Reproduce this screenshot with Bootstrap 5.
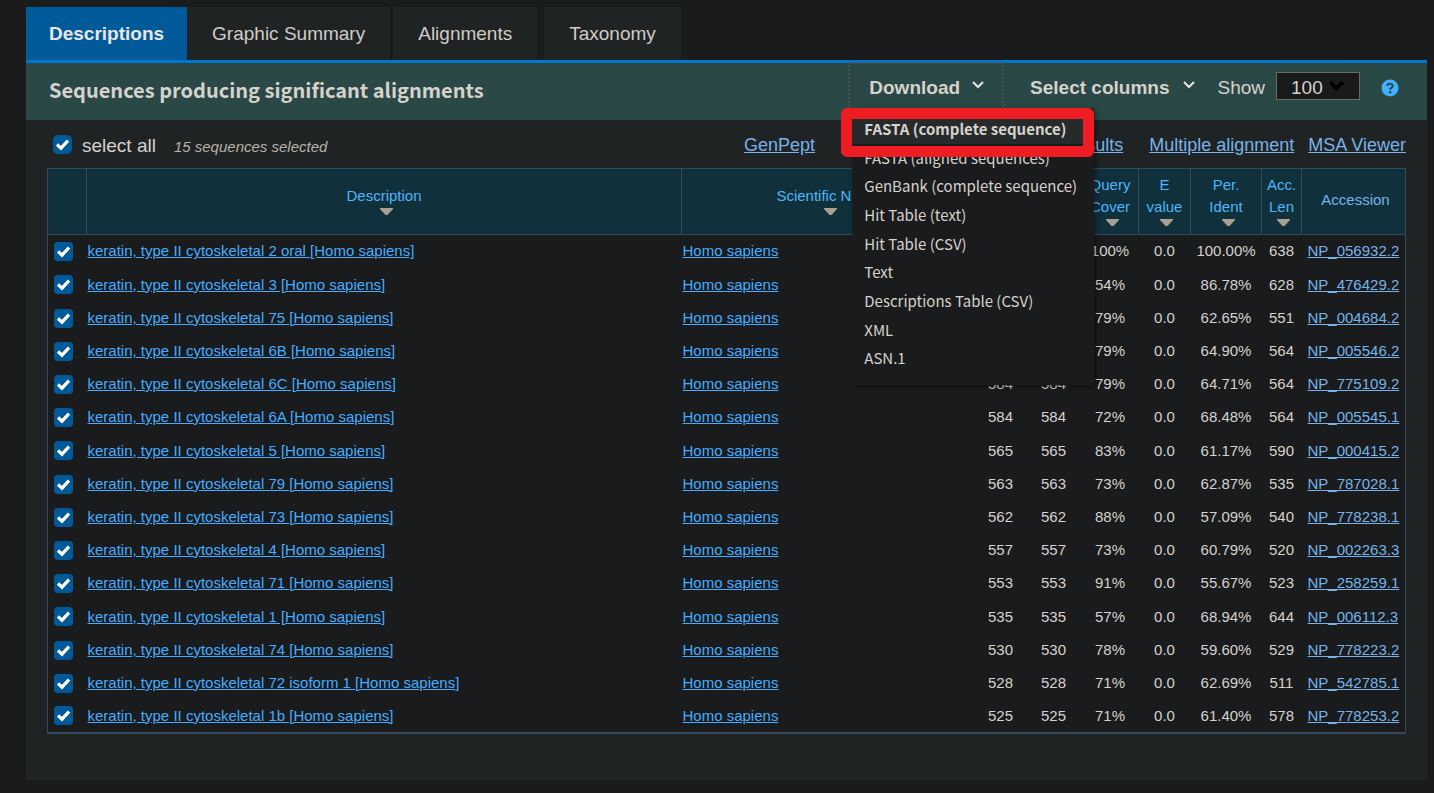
<!DOCTYPE html>
<html lang="en" data-bs-theme="dark">
<head>
<meta charset="utf-8">
<meta name="viewport" content="width=device-width, initial-scale=1">
<title>Sequence alignments</title>
<link href="https://cdn.jsdelivr.net/npm/bootstrap@5.3.0/dist/css/bootstrap.min.css" rel="stylesheet">
<style>
  body { background: #191b1c; color: #d6d2cc; font-family: "Liberation Sans", Arial, sans-serif; font-size: 15px; line-height: 22px; }
  .page-wrap { padding: 7px 7px 13px 26px; }
  a { color: #45adff; }
  a:hover { color: #8fcaff; }

  .result-tabs { border-bottom: 3px solid #0077cc; }
  .result-tabs .nav-link { background: #202324; color: #d0ccc6; font-size: 19px; line-height: 29px; padding: 12px 25px; border-radius: 0; }
  .result-tabs .nav-link.active { background: #005a99; color: #e8e6e3; font-weight: 700; padding: 12px 23px; }
  .tab-near { margin-left: 3px; }
  .tab-far { margin-left: 7px; }

  .panel-head { background: #294846; height: 57px; padding: 0 28px 4px 23px; font-size: 19px; }
  .panel-title { font: 700 20px/30px "Noto Sans CJK SC", sans-serif; color: #d6d2cc; }
  .head-tools { height: 50px; }
  .tool-btn { background: none; border: 0; padding: 0; color: inherit; font-weight: 700; gap: 12px; }
  .tool-btn svg { margin-bottom: 6px; }
  .columns-btn { gap: 14px; }
  .download-box { margin-top: -1px; margin-right: 26px; height: 48px; border: 2px dotted #4b5052; border-bottom: 0; }
  .download-box .tool-btn { height: 46px; padding: 2px 18px 0 19px; }
  .show-label { margin-left: 22px; margin-right: 11px; }
  .show-select { width: 84px; height: 28px; border: 1px solid #73695c; border-radius: 0; background-color: #181a1b; color: #d6d2cc; font-size: 19px; line-height: 22px; padding: 4px 0 0 14px; margin-bottom: 5px;
    background-image: url("data:image/svg+xml,%3Csvg xmlns='http://www.w3.org/2000/svg' viewBox='0 0 16 16'%3E%3Cpath d='M2 5l6 5.500 6-5.500' fill='none' stroke='%23000' stroke-width='3.500'/%3E%3C/svg%3E"); background-size: 17px; background-position: right 14px top 4px; }
  .help-btn { margin-left: 21px; line-height: 0; }

  .download-menu { top: 44px; left: 2px; width: 242px; height: 277px; padding: 7px 0 12px; margin: 0; z-index: 5; background: #191b1c; box-shadow: 2px 2px 5px rgba(0, 0, 0, .4); list-style: none; font: 15px/28px "Noto Sans CJK SC", sans-serif; }
  .download-menu a { color: #d6d2cc; text-decoration: none; padding-left: 12px; white-space: nowrap; }
  .download-menu li:first-child { background: #262a2b; font-weight: 700; }
  .callout-frame { top: 44px; left: -9px; width: 253px; height: 49px; z-index: 6; border: 11px solid #ee1c23; border-radius: 6px; pointer-events: none; }

  .panel-main { background: #202324; padding: 0 21px 46px; }
  .list-bar { height: 48px; padding-left: 6px; font-size: 18px; }
  .list-bar a, .accession a { color: #77b3ea; }
  .select-all { font-size: 19px; }
  .select-all label { margin-left: 10px; margin-top: 3px; }
  .picked { font-size: 15px; margin: 5px 0 0 18px; color: #b9b2a8; }
  .list-links { gap: 26px; padding-top: 2px; }
  .list-links .pair { gap: 14px; }
  .form-check-input { width: 19px; height: 19px; margin: 0; border: 0; border-radius: 4px; }
  .form-check-input:checked { background-color: #005a99; background-size: 19px; background-image: url("data:image/svg+xml,%3Csvg xmlns='http://www.w3.org/2000/svg' viewBox='0 0 19 19'%3E%3Cpath d='M4 9.500l4 3.700L15 5.700' fill='none' stroke='%23fff' stroke-width='3.200'/%3E%3C/svg%3E"); }

  .hits { width: 100%; table-layout: fixed; border-collapse: collapse; background: #191b1c; border: 1px solid #34495e; border-bottom-width: 2px; }
  .hits th { height: 66px; border: 1px solid #34495e; background: #10313b; color: #4fb4fa; font-weight: 400; text-align: center; vertical-align: middle; padding: 0 0 3px; }
  .hits th.accession-head { color: #77b3ea; padding-left: 4px; }
  .hits th svg { display: block; margin: 1px auto 0; position: relative; left: 2px; }
  .hits td { height: 33px; padding: 0; text-align: center; white-space: nowrap; }
  .hits tbody tr:nth-child(5n+2) td { height: 34px; }
  .hits .txt { text-align: left; overflow: hidden; text-overflow: ellipsis; padding-left: 1px; }
  .hits .accession { text-align: left; padding-left: 6px; }
  .hits .form-check-input { display: block; margin: 0 0 0 6px; }
  .c-pick { width: 39px; } .c-sci { width: 294px; } .c-max { width: 50px; } .c-total { width: 56px; } .c-cover { width: 57px; }
  .c-e { width: 52px; } .c-ident { width: 71px; } .c-len { width: 40px; } .c-acc { width: 104px; }
</style>
</head>
<body>
<svg class="d-none" aria-hidden="true">
  <symbol id="sort" viewBox="0 0 13 7"><path d="M0 0h13v1L7.500 7h-2L0 1z" fill="#a8a095"/></symbol>
  <symbol id="chev" viewBox="0 0 12 8"><path d="M1 1l5 5 5-5" fill="none" stroke="#e8e6e3" stroke-width="2"/></symbol>
</svg>
<main class="page-wrap">
  <nav class="nav result-tabs" aria-label="Results">
    <a class="nav-link active" href="#descriptions">Descriptions</a>
    <a class="nav-link" href="#graphic">Graphic Summary</a>
    <a class="nav-link tab-near" href="#alignments">Alignments</a>
    <a class="nav-link tab-far" href="#taxonomy">Taxonomy</a>
  </nav>

  <section id="descriptions">
    <header class="panel-head d-flex justify-content-between">
      <h1 class="panel-title mb-0 align-self-center">Sequences producing significant alignments</h1>
      <div class="head-tools d-flex align-items-center">
        <div class="download-box position-relative align-self-start">
          <button class="tool-btn d-flex align-items-center" type="button" aria-expanded="true">Download <svg width="12" height="8"><use href="#chev"/></svg></button>
          <ul class="download-menu position-absolute d-flex flex-column">
            <li class="flex-fill"><a class="d-block" href="#">FASTA (complete sequence)</a></li>
            <li class="flex-fill"><a class="d-block" href="#">FASTA (aligned sequences)</a></li>
            <li class="flex-fill"><a class="d-block" href="#">GenBank (complete sequence)</a></li>
            <li class="flex-fill"><a class="d-block" href="#">Hit Table (text)</a></li>
            <li class="flex-fill"><a class="d-block" href="#">Hit Table (CSV)</a></li>
            <li class="flex-fill"><a class="d-block" href="#">Text</a></li>
            <li class="flex-fill"><a class="d-block" href="#">Descriptions Table (CSV)</a></li>
            <li class="flex-fill"><a class="d-block" href="#">XML</a></li>
            <li class="flex-fill"><a class="d-block" href="#">ASN.1</a></li>
          </ul>
          <div class="callout-frame position-absolute"></div>
        </div>
        <button class="tool-btn columns-btn d-flex align-items-center" type="button">Select columns <svg width="12" height="8"><use href="#chev"/></svg></button>
        <label class="show-label" for="show">Show</label>
        <select class="form-select show-select" id="show"><option>10</option><option>50</option><option selected>100</option></select>
        <a class="help-btn" href="#" aria-label="Help"><svg width="18" height="18" viewBox="0 0 18 18"><circle cx="9" cy="9" r="8.500" fill="#40b0ff"/><path d="M6.300 7C6.500 3.800 11.800 3.900 11.700 7c-.1 1.900-2.600 1.900-2.600 3.700" fill="none" stroke="#294846" stroke-width="2"/><circle cx="9.100" cy="13.200" r="1.300" fill="#294846"/></svg></a>
      </div>
    </header>

    <div class="panel-main">
      <div class="list-bar d-flex justify-content-between align-items-center">
        <div class="d-flex align-items-center">
          <div class="select-all d-flex align-items-center"><input class="form-check-input" type="checkbox" id="all" checked><label for="all">select all</label></div>
          <em class="picked">15 sequences selected</em>
        </div>
        <div class="list-links d-flex">
          <a href="#">GenPept</a><a href="#">Graphics</a><a href="#">Distance tree of results</a>
          <div class="pair d-flex"><a href="#">Multiple alignment</a><a href="#">MSA Viewer</a></div>
        </div>
      </div>

      <table class="hits">
        <colgroup><col class="c-pick"><col><col class="c-sci"><col class="c-max"><col class="c-total"><col class="c-cover"><col class="c-e"><col class="c-ident"><col class="c-len"><col class="c-acc"></colgroup>
        <thead>
          <tr>
            <th></th>
            <th>Description<svg width="13" height="7"><use href="#sort"/></svg></th>
            <th>Scientific Name<svg width="13" height="7"><use href="#sort"/></svg></th>
            <th aria-label="Max Score"></th>
            <th aria-label="Total Score"></th>
            <th>Query Cover<svg width="13" height="7"><use href="#sort"/></svg></th>
            <th>E<br>value<svg width="13" height="7"><use href="#sort"/></svg></th>
            <th>Per.<br>Ident<svg width="13" height="7"><use href="#sort"/></svg></th>
            <th>Acc. Len<svg width="13" height="7"><use href="#sort"/></svg></th>
            <th class="accession-head">Accession</th>
          </tr>
        </thead>
        <tbody>
          <tr><td><input class="form-check-input" type="checkbox" aria-label="Select NP_056932.2" checked></td><td class="txt"><a href="#">keratin, type II cytoskeletal 2 oral [Homo sapiens]</a></td><td class="txt"><a href="#">Homo sapiens</a></td><td></td><td></td><td>100%</td><td>0.0</td><td>100.00%</td><td>638</td><td class="accession"><a href="#">NP_056932.2</a></td></tr>
          <tr><td><input class="form-check-input" type="checkbox" aria-label="Select NP_476429.2" checked></td><td class="txt"><a href="#">keratin, type II cytoskeletal 3 [Homo sapiens]</a></td><td class="txt"><a href="#">Homo sapiens</a></td><td></td><td></td><td>54%</td><td>0.0</td><td>86.78%</td><td>628</td><td class="accession"><a href="#">NP_476429.2</a></td></tr>
          <tr><td><input class="form-check-input" type="checkbox" aria-label="Select NP_004684.2" checked></td><td class="txt"><a href="#">keratin, type II cytoskeletal 75 [Homo sapiens]</a></td><td class="txt"><a href="#">Homo sapiens</a></td><td></td><td></td><td>79%</td><td>0.0</td><td>62.65%</td><td>551</td><td class="accession"><a href="#">NP_004684.2</a></td></tr>
          <tr><td><input class="form-check-input" type="checkbox" aria-label="Select NP_005546.2" checked></td><td class="txt"><a href="#">keratin, type II cytoskeletal 6B [Homo sapiens]</a></td><td class="txt"><a href="#">Homo sapiens</a></td><td></td><td></td><td>79%</td><td>0.0</td><td>64.90%</td><td>564</td><td class="accession"><a href="#">NP_005546.2</a></td></tr>
          <tr><td><input class="form-check-input" type="checkbox" aria-label="Select NP_775109.2" checked></td><td class="txt"><a href="#">keratin, type II cytoskeletal 6C [Homo sapiens]</a></td><td class="txt"><a href="#">Homo sapiens</a></td><td>584</td><td>584</td><td>79%</td><td>0.0</td><td>64.71%</td><td>564</td><td class="accession"><a href="#">NP_775109.2</a></td></tr>
          <tr><td><input class="form-check-input" type="checkbox" aria-label="Select NP_005545.1" checked></td><td class="txt"><a href="#">keratin, type II cytoskeletal 6A [Homo sapiens]</a></td><td class="txt"><a href="#">Homo sapiens</a></td><td>584</td><td>584</td><td>72%</td><td>0.0</td><td>68.48%</td><td>564</td><td class="accession"><a href="#">NP_005545.1</a></td></tr>
          <tr><td><input class="form-check-input" type="checkbox" aria-label="Select NP_000415.2" checked></td><td class="txt"><a href="#">keratin, type II cytoskeletal 5 [Homo sapiens]</a></td><td class="txt"><a href="#">Homo sapiens</a></td><td>565</td><td>565</td><td>83%</td><td>0.0</td><td>61.17%</td><td>590</td><td class="accession"><a href="#">NP_000415.2</a></td></tr>
          <tr><td><input class="form-check-input" type="checkbox" aria-label="Select NP_787028.1" checked></td><td class="txt"><a href="#">keratin, type II cytoskeletal 79 [Homo sapiens]</a></td><td class="txt"><a href="#">Homo sapiens</a></td><td>563</td><td>563</td><td>73%</td><td>0.0</td><td>62.87%</td><td>535</td><td class="accession"><a href="#">NP_787028.1</a></td></tr>
          <tr><td><input class="form-check-input" type="checkbox" aria-label="Select NP_778238.1" checked></td><td class="txt"><a href="#">keratin, type II cytoskeletal 73 [Homo sapiens]</a></td><td class="txt"><a href="#">Homo sapiens</a></td><td>562</td><td>562</td><td>88%</td><td>0.0</td><td>57.09%</td><td>540</td><td class="accession"><a href="#">NP_778238.1</a></td></tr>
          <tr><td><input class="form-check-input" type="checkbox" aria-label="Select NP_002263.3" checked></td><td class="txt"><a href="#">keratin, type II cytoskeletal 4 [Homo sapiens]</a></td><td class="txt"><a href="#">Homo sapiens</a></td><td>557</td><td>557</td><td>73%</td><td>0.0</td><td>60.79%</td><td>520</td><td class="accession"><a href="#">NP_002263.3</a></td></tr>
          <tr><td><input class="form-check-input" type="checkbox" aria-label="Select NP_258259.1" checked></td><td class="txt"><a href="#">keratin, type II cytoskeletal 71 [Homo sapiens]</a></td><td class="txt"><a href="#">Homo sapiens</a></td><td>553</td><td>553</td><td>91%</td><td>0.0</td><td>55.67%</td><td>523</td><td class="accession"><a href="#">NP_258259.1</a></td></tr>
          <tr><td><input class="form-check-input" type="checkbox" aria-label="Select NP_006112.3" checked></td><td class="txt"><a href="#">keratin, type II cytoskeletal 1 [Homo sapiens]</a></td><td class="txt"><a href="#">Homo sapiens</a></td><td>535</td><td>535</td><td>57%</td><td>0.0</td><td>68.94%</td><td>644</td><td class="accession"><a href="#">NP_006112.3</a></td></tr>
          <tr><td><input class="form-check-input" type="checkbox" aria-label="Select NP_778223.2" checked></td><td class="txt"><a href="#">keratin, type II cytoskeletal 74 [Homo sapiens]</a></td><td class="txt"><a href="#">Homo sapiens</a></td><td>530</td><td>530</td><td>78%</td><td>0.0</td><td>59.60%</td><td>529</td><td class="accession"><a href="#">NP_778223.2</a></td></tr>
          <tr><td><input class="form-check-input" type="checkbox" aria-label="Select NP_542785.1" checked></td><td class="txt"><a href="#">keratin, type II cytoskeletal 72 isoform 1 [Homo sapiens]</a></td><td class="txt"><a href="#">Homo sapiens</a></td><td>528</td><td>528</td><td>71%</td><td>0.0</td><td>62.69%</td><td>511</td><td class="accession"><a href="#">NP_542785.1</a></td></tr>
          <tr><td><input class="form-check-input" type="checkbox" aria-label="Select NP_778253.2" checked></td><td class="txt"><a href="#">keratin, type II cytoskeletal 1b [Homo sapiens]</a></td><td class="txt"><a href="#">Homo sapiens</a></td><td>525</td><td>525</td><td>71%</td><td>0.0</td><td>61.40%</td><td>578</td><td class="accession"><a href="#">NP_778253.2</a></td></tr>
        </tbody>
      </table>
    </div>
  </section>
</main>
<script src="https://cdn.jsdelivr.net/npm/bootstrap@5.3.0/dist/js/bootstrap.bundle.min.js"></script>
</body>
</html>
